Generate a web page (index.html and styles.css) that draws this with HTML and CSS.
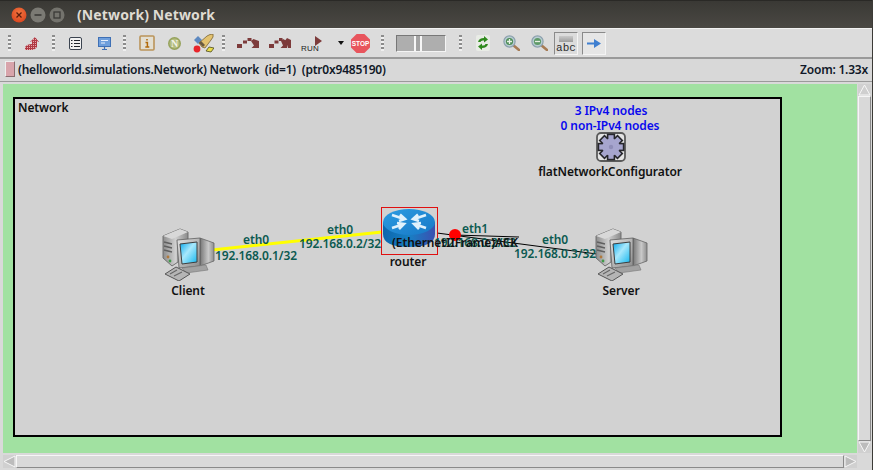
FILE: index.html
```html
<!DOCTYPE html>
<html lang="en">
<head>
<meta charset="utf-8">
<title>(Network) Network</title>
<link rel="stylesheet" href="styles.css">
</head>
<body>
<svg class="defs" width="0" height="0" aria-hidden="true">
  <defs>
    <linearGradient id="gTower" x1="0" y1="0" x2="1" y2="0"><stop offset="0" stop-color="#8d8d8d"/><stop offset=".5" stop-color="#cfcfcf"/><stop offset="1" stop-color="#8a8a8a"/></linearGradient>
    <linearGradient id="gMon" x1="0" y1="0" x2="1" y2="1"><stop offset="0" stop-color="#e4e4e4"/><stop offset="1" stop-color="#8a8a8a"/></linearGradient>
    <linearGradient id="gSide" x1="0" y1="0" x2="1" y2="0"><stop offset="0" stop-color="#767676"/><stop offset=".6" stop-color="#c9c9c9"/><stop offset="1" stop-color="#8e8e8e"/></linearGradient>
    <linearGradient id="gScreen" x1="0" y1="0" x2="1" y2="1"><stop offset="0" stop-color="#05a8ec"/><stop offset=".45" stop-color="#a8e8fc"/><stop offset="1" stop-color="#12b6ee"/></linearGradient>
    <linearGradient id="gRouter" x1="0" y1="0" x2="1" y2="0"><stop offset="0" stop-color="#0c66ad"/><stop offset=".5" stop-color="#1780c4"/><stop offset="1" stop-color="#3b4fb0"/></linearGradient>
    <linearGradient id="gRouterTop" x1="0" y1="0" x2="1" y2="1"><stop offset="0" stop-color="#2b9ce2"/><stop offset="1" stop-color="#1878c6"/></linearGradient>
    <radialGradient id="gClose" cx=".5" cy=".35" r=".7"><stop offset="0" stop-color="#f3763f"/><stop offset="1" stop-color="#d9431e"/></radialGradient>
    <pattern id="dither" width="2" height="2" patternUnits="userSpaceOnUse"><rect width="2" height="2" fill="#b03842"/><rect width="1" height="1" fill="#e6a6ab"/></pattern>
    <filter id="soft"><feGaussianBlur stdDeviation=".45"/></filter>
    <symbol id="computer" viewBox="0 0 53 53">
      <g filter="url(#soft)">
        <path d="M1 8 L18 1 L26 4 L26 14 L16 14 L16 34 L10 38 L1 30 Z" fill="url(#gTower)" stroke="#666" stroke-width=".9"/>
        <path d="M1 8 L18 1 L26 4 L10 11 Z" fill="#d8d8d8"/>
        <path d="M2 14 L10 16 M2 18 L10 20 M2 22 L10 24" stroke="#5f5f5f" stroke-width="1.5"/>
        <circle cx="6" cy="29" r="1.4" fill="#b07a3c"/><circle cx="8" cy="33" r="1.4" fill="#3f9a4a"/>
        <path d="M38 10 L52 15 L52 33 L38 38 Z" fill="url(#gSide)" stroke="#666" stroke-width=".8"/>
        <path d="M15 12 L38 10 L38 38 L17 40 Z" fill="url(#gMon)" stroke="#5e5e5e" stroke-width=".8"/>
        <path d="M18 16 L35 14 L35 34 L20 36 Z" fill="url(#gScreen)" stroke="#3e3e3e" stroke-width="1"/>
        <path d="M20 40 L44 37 L46 42 L24 45 Z" fill="#a2a2a2" stroke="#777" stroke-width=".6"/>
        <path d="M3 46 L14 39 L28 46 L17 53 Z" fill="#b5b5b5" stroke="#565656" stroke-width="1"/>
        <path d="M8 46 L15 42 M12 48 L20 44" stroke="#666" stroke-width="1.1"/>
      </g>
    </symbol>
    <g id="teeth">
      <rect x="12.4" y="3.2" width="5.2" height="6"/>
      <rect x="12.4" y="3.2" width="5.2" height="6" transform="rotate(45 15 15)"/>
      <rect x="12.4" y="3.2" width="5.2" height="6" transform="rotate(90 15 15)"/>
      <rect x="12.4" y="3.2" width="5.2" height="6" transform="rotate(135 15 15)"/>
      <rect x="12.4" y="3.2" width="5.2" height="6" transform="rotate(180 15 15)"/>
      <rect x="12.4" y="3.2" width="5.2" height="6" transform="rotate(225 15 15)"/>
      <rect x="12.4" y="3.2" width="5.2" height="6" transform="rotate(270 15 15)"/>
      <rect x="12.4" y="3.2" width="5.2" height="6" transform="rotate(315 15 15)"/>
      <circle cx="15" cy="15" r="8.6"/>
    </g>
  </defs>
</svg>

<header class="titlebar">
  <div class="winbtns">
    <svg class="winbtn" viewBox="0 0 16 16"><circle cx="8" cy="8" r="7.5" fill="url(#gClose)"/><path d="M5.5 5.5l5 5M10.5 5.5l-5 5" stroke="#5d1d0c" stroke-width="1.3"/></svg>
    <svg class="winbtn" viewBox="0 0 16 16"><circle cx="8" cy="8" r="7.5" fill="#7b7a74"/><path d="M4.5 8h7" stroke="#3b3a37" stroke-width="1.6"/></svg>
    <svg class="winbtn" viewBox="0 0 16 16"><circle cx="8" cy="8" r="7.5" fill="#74736d"/><rect x="5" y="5" width="6" height="6" fill="none" stroke="#3b3a37" stroke-width="1.3"/></svg>
  </div>
  <span class="title">(Network) Network</span>
</header>

<nav class="toolbar">
  <span class="grip g1"></span>
  <svg class="ti t-back" viewBox="0 0 14 13"><path d="M10 0 L14 5 L12 5 L12 10 Q10 13 7 13 L0 13 L0 10 Q2 7 7 7 L7 5 L5 5 Z" fill="url(#dither)"/></svg>
  <span class="grip g2"></span>
  <svg class="ti t-list" viewBox="0 0 13 13"><rect x=".5" y=".5" width="12" height="12" rx="1.5" fill="#f2f2f2" stroke="#3c4450"/><path d="M5 3.5h6M5 6.5h6M5 9.5h6M2 3.5h1.5M2 6.5h1.5M2 9.5h1.5" stroke="#20252c" stroke-width="1.2"/></svg>
  <svg class="ti t-mon" viewBox="0 0 13 13"><rect x=".5" y=".5" width="12" height="9" fill="#6f9fdc" stroke="#3f70b5"/><path d="M3 3.5h7M3 6h4" stroke="#e8f0fb" stroke-width="1.1"/><path d="M4 12.5h5M6.5 10v2" stroke="#3f70b5" stroke-width="1.2"/></svg>
  <span class="grip g3"></span>
  <svg class="ti t-info" viewBox="0 0 16 16"><rect x="1" y="1" width="14" height="14" rx="1" fill="#e3dfd2" stroke="#bb945a" stroke-width="1.6"/><path d="M8 4v1.6M6.5 7.4H8.4V12M6.3 12h4" stroke="#b26a08" stroke-width="1.5" fill="none"/></svg>
  <svg class="ti t-n" viewBox="0 0 13 13"><circle cx="6.5" cy="6.5" r="6.5" fill="#96a25c"/><circle cx="6.5" cy="6.5" r="5" fill="#b4bd80"/><text class="nglyph" x="6.5" y="10" text-anchor="middle">N</text></svg>
  <svg class="ti t-rocket" viewBox="0 0 21 19"><path d="M1 6 L5 2 L9 6 L5 10 Z" fill="#5c88c0"/><path d="M9 13 L6 9 L14 2 Q17 0 20 0 Q21 3 18 6 L12 14 Z" fill="#e3c26f" stroke="#7b6434" stroke-width=".8"/><path d="M6 9 L10 13 L12 11 L8 7 Z" fill="#6a5a40"/><circle cx="4" cy="15" r="3.4" fill="#e8242a"/><path d="M13 17 L16 13 L21 14 L18 18 Z" fill="#e9dc4a" stroke="#4d4a1b" stroke-width=".8"/></svg>
  <span class="grip g4"></span>
  <svg class="ti t-step" viewBox="0 0 22 10"><g fill="#7d3b3b"><rect x="0" y="6" width="5" height="4"/><rect x="6" y="2.5" width="4" height="3"/><rect x="10.5" y="0" width="4" height="3"/><path d="M14 3 L16.5 1 L22 3 L22 10 L14.5 10 L17 7.5 Z"/></g></svg>
  <svg class="ti t-fast" viewBox="0 0 22 10"><g fill="#7d3b3b"><rect x="0" y="6" width="5" height="4"/><rect x="5.5" y="2.5" width="4" height="3"/><rect x="10" y="0" width="3.5" height="3"/><path d="M12 3 L14 1 L18 3 L18 10 L11.5 10 L14 7.5 Z M16.5 2 L18 0 L22 2 L22 10 L19 10 Z"/></g></svg>
  <svg class="ti t-run" viewBox="0 0 22 17"><path d="M14 1 L21 6 L14 11 Z" fill="#7d3b3b"/><text class="runglyph" x="0" y="16">RUN</text></svg>
  <svg class="ti t-drop" viewBox="0 0 6 4"><path d="M0 0h6L3 4Z" fill="#111"/></svg>
  <svg class="ti t-stop" viewBox="0 0 19 19"><path d="M5.6 0h7.8L19 5.6v7.8L13.4 19H5.6L0 13.4V5.6Z" fill="#e8555d"/><text class="stopglyph" x="9.5" y="12" text-anchor="middle">STOP</text></svg>
  <span class="grip g5"></span>
  <div class="slider"><span class="thumb"></span></div>
  <span class="grip g6"></span>
  <svg class="ti t-refresh" viewBox="0 0 14 16"><rect width="14" height="16" rx="2" fill="#e9ece6"/><path d="M2 7 Q3 3 8 3 L8 1 L12 4.5 L8 7.5 L8 5.5 Q5 5 4.5 7Z M12 9 Q11 13 6 13 L6 15 L2 11.5 L6 8.5 L6 10.5 Q9 11 9.5 9Z" fill="#2f8a1d"/></svg>
  <svg class="ti t-zoom" viewBox="0 0 17 16"><path d="M10 10 L16 15" stroke="#a77c55" stroke-width="2.6" stroke-linecap="round"/><circle cx="6.5" cy="6.5" r="5.6" fill="#b9cdd2" stroke="#8ba0ad" stroke-width="1.2"/><circle cx="6.5" cy="6.5" r="3.6" fill="#4f8e58"/><path d="M4 6.5h5M6.5 4v5" stroke="#e8f0e4" stroke-width="1.3"/></svg>
  <svg class="ti t-zoom2" viewBox="0 0 17 16"><path d="M10 10 L16 15" stroke="#a77c55" stroke-width="2.6" stroke-linecap="round"/><circle cx="6.5" cy="6.5" r="5.6" fill="#b9cdd2" stroke="#8ba0ad" stroke-width="1.2"/><circle cx="6.5" cy="6.5" r="3.6" fill="#5f9a68"/><path d="M4 6.5h5" stroke="#e8f0e4" stroke-width="1.3"/></svg>
  <div class="toggle t-abc"><span class="abcbar"></span><span class="abctext">abc</span></div>
  <div class="toggle t-arrow"><svg class="arrowico" viewBox="0 0 14 9"><path d="M0 3.4h7V0l7 4.5L7 9V5.6H0Z" fill="#3f7fd0"/></svg></div>
</nav>

<div class="infobar">
  <span class="swatch"></span>
  <span class="infotext">(helloworld.simulations.Network) Network  (id=1)  (ptr0x9485190)</span>
  <span class="zoomtext">Zoom: 1.33x</span>
</div>

<main class="viewport">
  <section class="canvas">
    <div class="module"><span class="lbl modname">Network</span></div>

    <svg class="wires" width="854" height="369" viewBox="0 0 854 369">
      <path d="M209 166 L379 148" stroke="#ffff00" stroke-width="3"/>
      <path d="M434 149 L594 170" stroke="#000" stroke-width="1"/>
      <path d="M452 151 L516 153" stroke="#000" stroke-width="1"/>
      <circle cx="452" cy="151" r="6" fill="#ff0000"/>
    </svg>

    <svg class="node n-client"><use href="#computer"/></svg>
    <svg class="node n-server"><use href="#computer"/></svg>

    <div class="routerbox">
      <svg class="routerico" viewBox="0 0 52 38">
        <path d="M0 13 V25 Q0 38 26 38 Q52 38 52 25 V13 Z" fill="url(#gRouter)"/>
        <ellipse cx="26" cy="13" rx="26" ry="13" fill="url(#gRouterTop)"/>
        <g fill="none" stroke="#dff1fc" stroke-width="2.6" filter="url(#soft)">
          <path d="M9 6 L21 10 M17 5.5 L22 10 L16 12"/>
          <path d="M21 15 L9 19 M14 14 L21 15 L16 20"/>
          <path d="M43 6 L31 10 M35 5.5 L30 10 L36 12"/>
          <path d="M31 15 L43 19 M38 14 L31 15 L36 20"/>
        </g>
      </svg>
    </div>

    <svg class="gear" viewBox="0 0 30 30">
      <rect x="1" y="1" width="28" height="28" rx="4" fill="#e4e4e4" stroke="#5a5a5a" stroke-width="1.8"/>
      <use href="#teeth" fill="#26262b" stroke="#26262b" stroke-width="3.2"/>
      <use href="#teeth" fill="#a6a5ce"/>
      <circle cx="15" cy="15" r="2.2" fill="#8f8eb8"/>
    </svg>

    <span class="lbl cfg c1">3 IPv4 nodes</span>
    <span class="lbl cfg c2">0 non-IPv4 nodes</span>
    <span class="lbl name n1">flatNetworkConfigurator</span>
    <span class="lbl name n2">Client</span>
    <span class="lbl name n3">router</span>
    <span class="lbl name n4">Server</span>

    <span class="lbl ifc e1">eth0</span>
    <span class="lbl ifc e2">192.168.0.1/32</span>
    <span class="lbl ifc e3">eth0</span>
    <span class="lbl ifc e4">192.168.0.2/32</span>
    <span class="lbl ifc e5">eth1</span>
    <span class="lbl ifc e6">192.168.0.2/32</span>
    <span class="lbl ifc e7">eth0</span>
    <span class="lbl ifc e8">192.168.0.3/32</span>
    <span class="lbl name msg">(EthernetIIFrame)ACK</span>
  </section>

  <div class="vscroll">
    <svg class="sarrow sa-v" viewBox="0 0 13 12"><path d="M6.5 1 L1 11 H12 Z" fill="#cfcfcf" stroke="#f7f7f7"/></svg>
    <div class="vtrough"></div>
    <svg class="sarrow sa-v" viewBox="0 0 13 12"><path d="M6.5 11 L1 1 H12 Z" fill="#bcbcbc" stroke="#f7f7f7"/></svg>
  </div>

  <div class="hscroll">
    <svg class="sarrow sa-h" viewBox="0 0 13 13"><path d="M1 6.5 L12 1 V12 Z" fill="#bcbcbc" stroke="#f7f7f7"/></svg>
    <div class="htrough"></div>
    <svg class="sarrow sa-h" viewBox="0 0 13 13"><path d="M12 6.5 L1 1 V12 Z" fill="#bcbcbc" stroke="#f7f7f7"/></svg>
  </div>
  <div class="corner"></div>
</main>
</body>
</html>
```

FILE: styles.css
```css
* { box-sizing: border-box; }
html, body { margin: 0; padding: 0; }
body {
  width: 873px;
  height: 470px;
  overflow: hidden;
  display: flex;
  flex-direction: column;
  background: #d9d9d9;
  font-family: "Noto Sans", "Open Sans", sans-serif;
  border-right: 1px solid #3c3b37;
}
.defs { position: absolute; }

/* Title bar */
.titlebar {
  flex: 0 0 28px;
  display: flex;
  align-items: center;
  background: linear-gradient(#3a3935, #4a4843);
  border-top: 1px solid #2a2926;
  padding-left: 11px;
}
.winbtns { display: flex; gap: 3px; }
.winbtn { width: 16px; height: 16px; display: block; }
.title {
  margin-left: 12px;
  font-size: 14px;
  font-weight: 700;
  letter-spacing: .12px;
  color: #dfdbd2;
  white-space: nowrap;
}

/* Toolbar */
.toolbar {
  flex: 0 0 31px;
  display: flex;
  align-items: center;
  background: #dcdcdc;
  border-top: 1px solid #f2f2f2;
  border-bottom: 2px solid #9a9a9a;
  padding-left: 8px;
}
.grip {
  flex: none;
  width: 3px;
  height: 16px;
  background: repeating-linear-gradient(#8c8c8c 0 2px, #f0f0f0 2px 4px);
}
.ti { flex: none; display: block; }
.g2 { margin-left: 13px; }
.g3 { margin-left: 12px; }
.g4 { margin-left: 8px; }
.g5 { margin-left: 11px; }
.g6 { margin-left: 13px; }
.t-back { width: 14px; height: 13px; margin-left: 14px; }
.t-list { width: 13px; height: 13px; margin-left: 14px; }
.t-mon { width: 13px; height: 13px; margin-left: 16px; }
.t-info { width: 16px; height: 16px; margin-left: 13px; }
.t-n { width: 13px; height: 13px; margin-left: 13px; }
.t-rocket { width: 21px; height: 19px; margin-left: 12px; }
.t-step { width: 22px; height: 10px; margin-left: 12px; }
.t-fast { width: 22px; height: 10px; margin-left: 10px; }
.t-run { width: 22px; height: 17px; margin-left: 10px; }
.t-drop { width: 6px; height: 4px; margin-left: 15px; }
.t-stop { width: 19px; height: 19px; margin-left: 7px; }
.t-refresh { width: 14px; height: 16px; margin-left: 14px; }
.t-zoom { width: 17px; height: 16px; margin-left: 13px; }
.t-zoom2 { width: 17px; height: 16px; margin-left: 11px; }
.nglyph { font: 700 10px "Liberation Serif", serif; fill: #f3f3e6; }
.runglyph { font: 400 8px "Liberation Sans", sans-serif; fill: #222; letter-spacing: .2px; }
.stopglyph { font: 700 6.5px "Liberation Sans", sans-serif; fill: #fff; }

.slider {
  flex: none;
  width: 50px;
  height: 17px;
  margin-left: 12px;
  display: flex;
  padding-left: 17px;
  background: #aeaeae;
  border: 1px solid;
  border-color: #777 #f4f4f4 #f4f4f4 #777;
}
.thumb {
  width: 8px;
  background: #a4a4a4;
  border-left: 2px solid #f6f6f6;
  border-right: 2px solid #f6f6f6;
}
.toggle {
  flex: none;
  width: 24px;
  height: 23px;
  display: flex;
  flex-direction: column;
  align-items: center;
  border: 1px solid;
}
.t-abc {
  margin-left: 6px;
  border-color: #8a8a8a #f4f4f4 #f4f4f4 #8a8a8a;
}
.t-arrow {
  margin-left: 4px;
  justify-content: center;
  border-color: #8a8a8a #f4f4f4 #f4f4f4 #8a8a8a;
  background: #e6e6e6;
}
.abcbar {
  width: 14px;
  height: 6px;
  margin-top: 3px;
  background: linear-gradient(#c9c9c9, #9c9c9c);
}
.abctext {
  font: 400 11px/11px "Liberation Mono", monospace;
  color: #2c2c2c;
  margin-top: 1px;
}
.arrowico { width: 14px; height: 9px; display: block; }

/* Info bar */
.infobar {
  flex: 0 0 23px;
  display: flex;
  align-items: center;
  padding: 0 4px 2px 5px;
  background: #d8d8d8;
  border-bottom: 1px solid #9a9a9a;
  font-size: 12px;
  font-weight: 600;
  letter-spacing: -.22px;
  color: #101828;
  white-space: pre;
}
.swatch {
  width: 10px;
  height: 16px;
  background: #d8a4ab;
  border: 1px solid;
  border-color: #eee #8a6d70 #8a6d70 #eee;
  margin-right: 3px;
}
.infotext { flex: 1; }

/* Main area */
.viewport {
  flex: 1;
  display: grid;
  grid-template-columns: 855px 1fr;
  grid-template-rows: 369px 1fr;
  padding: 2px 1px 0 2px;
  background: #d9d9d9;
}
.canvas {
  position: relative;
  background: #a1e1a1;
  overflow: hidden;
  margin-left: 1px;
}
.module {
  position: absolute;
  left: 10px;
  top: 13px;
  width: 769px;
  height: 340px;
  background: #d2d2d2;
  border: 2px solid #000;
}
.wires { position: absolute; left: 0; top: 0; }
.node { position: absolute; width: 53px; height: 53px; }
.n-client { left: 159px; top: 144px; }
.n-server { left: 592px; top: 144px; }
.routerbox {
  position: absolute;
  left: 378px;
  top: 123px;
  width: 57px;
  height: 48px;
  border: 1px solid #e01010;
  padding: 1px;
}
.routerico { width: 52px; height: 38px; display: block; }
.gear { position: absolute; left: 593px; top: 48px; width: 30px; height: 30px; }

.lbl {
  position: absolute;
  font-size: 12px;
  line-height: 16px;
  font-weight: 600;
  letter-spacing: -.1px;
  white-space: nowrap;
  transform: translateX(-50%);
}
.modname { left: 3px; top: 1px; transform: none; color: #111; }
.name { color: #111; }
.cfg { color: #0a0aee; }
.ifc { color: #0b5a50; }
.c1 { left: 608px; top: 19px; }
.c2 { left: 607px; top: 34px; }
.n1 { left: 607px; top: 80px; }
.n2 { left: 185px; top: 199px; }
.n3 { left: 405px; top: 170px; }
.n4 { left: 618px; top: 199px; }
.e1 { left: 253px; top: 148px; }
.e2 { left: 253px; top: 164px; }
.e3 { left: 337px; top: 138px; }
.e4 { left: 337px; top: 152px; }
.e5 { left: 472px; top: 137px; }
.e6 { left: 472px; top: 151px; }
.e7 { left: 552px; top: 148px; }
.e8 { left: 552px; top: 162px; }
.msg { left: 452px; top: 151px; }

/* Scrollbars */
.vscroll {
  display: flex;
  flex-direction: column;
  margin-left: 1px;
}
.vtrough {
  flex: 1;
  background: #d9d9d9;
  border: 1px solid;
  border-color: #f6f6f6 #8a8a8a #8a8a8a #f6f6f6;
}
.hscroll {
  display: flex;
  margin: 2px 0 0 1px;
  height: 13px;
}
.htrough {
  flex: 1;
  background: #d9d9d9;
  border: 1px solid;
  border-color: #f6f6f6 #8a8a8a #8a8a8a #f6f6f6;
}
.sarrow { flex: none; display: block; background: #d0d0d0; }
.sa-v { width: 13px; height: 12px; }
.sa-h { width: 13px; height: 13px; }
.corner { background: #d9d9d9; }
```
